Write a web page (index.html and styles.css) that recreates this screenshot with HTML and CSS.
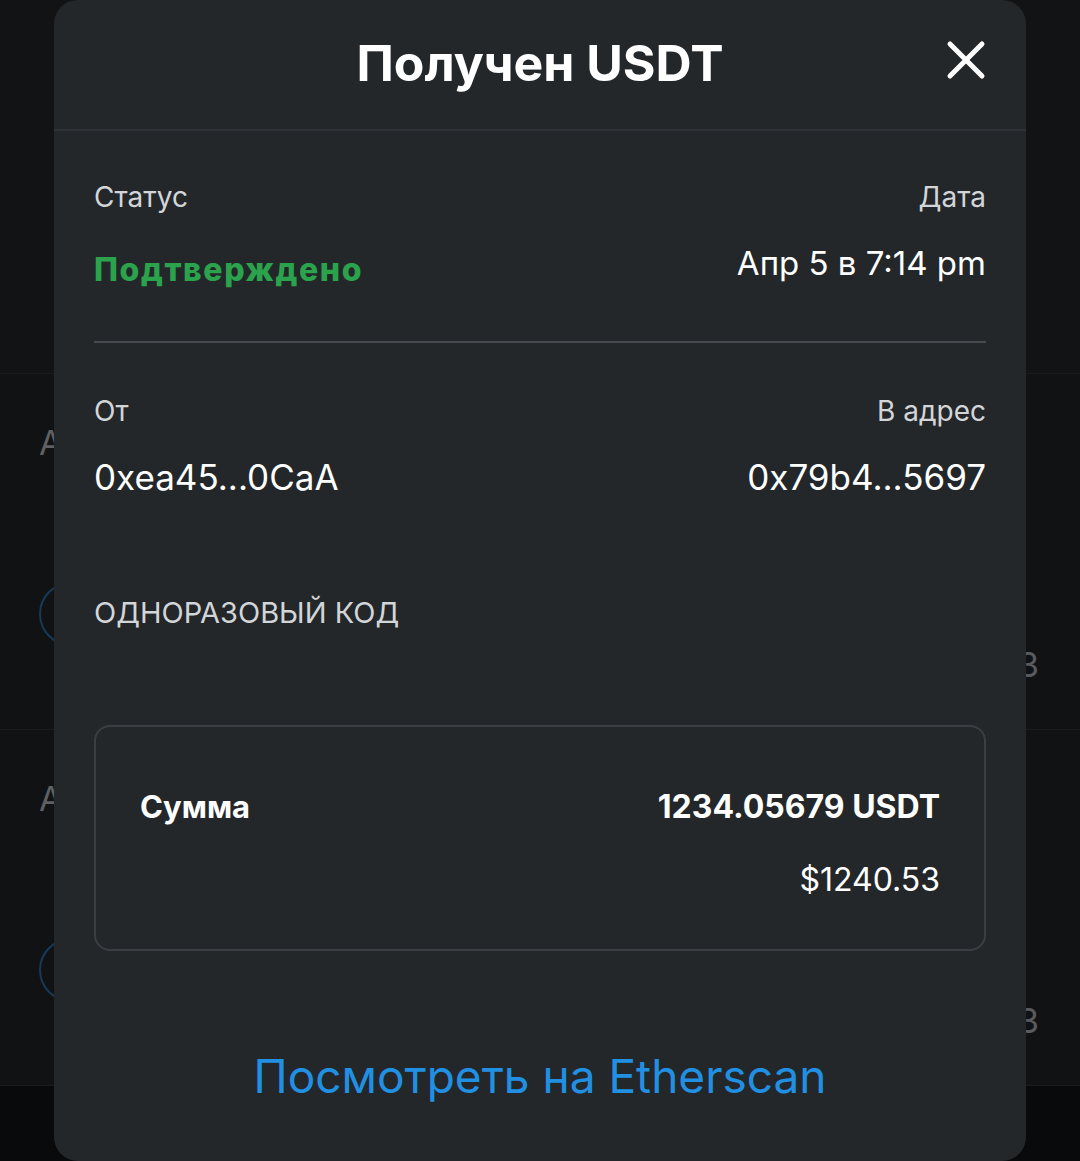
FILE: index.html
```html
<!DOCTYPE html>
<html lang="ru">
<head>
<meta charset="utf-8">
<title>Получен USDT</title>
<link rel="stylesheet" href="styles.css">
</head>
<body>
<div class="screen">
  <div class="backdrop">
    <div class="bg-top"></div>
    <div class="bg-row">
      <span class="bg-letter">A</span>
      <span class="bg-circle"></span>
      <span class="bg-num">3</span>
    </div>
    <div class="bg-row">
      <span class="bg-letter">A</span>
      <span class="bg-circle"></span>
      <span class="bg-num">3</span>
    </div>
    <div class="bg-nav"></div>
  </div>

  <div class="modal">
    <div class="modal-header">
      <h1 class="modal-title">Получен USDT</h1>
      <button class="close-btn" aria-label="Закрыть">
        <svg width="40" height="40" viewBox="0 0 40 40"><path d="M4 4 L36 36 M36 4 L4 36" stroke="#fff" stroke-width="5" stroke-linecap="round" fill="none"/></svg>
      </button>
    </div>
    <div class="modal-body">
      <div class="pair-row">
        <div class="col">
          <div class="label">Статус</div>
          <div class="status">Подтверждено</div>
        </div>
        <div class="col col-right">
          <div class="label">Дата</div>
          <div class="value">Апр 5 в 7:14 pm</div>
        </div>
      </div>
      <div class="divider"></div>
      <div class="pair-row pair-addr">
        <div class="col">
          <div class="label">От</div>
          <div class="value">0xea45...0CaA</div>
        </div>
        <div class="col col-right">
          <div class="label">В адрес</div>
          <div class="value">0x79b4...5697</div>
        </div>
      </div>
      <div class="label otp">ОДНОРАЗОВЫЙ КОД</div>
      <div class="amount-box">
        <div class="amount-row">
          <span class="amount-label">Сумма</span>
          <span class="amount-value">1234.05679 USDT</span>
        </div>
        <div class="amount-fiat">$1240.53</div>
      </div>
      <a class="explorer-link" href="#">Посмотреть на Etherscan</a>
    </div>
  </div>
</div>
</body>
</html>
```

FILE: styles.css
```css
* { box-sizing: border-box; }
html, body {
  margin: 0;
  padding: 0;
  background: #0a0b0c;
}
body {
  font-family: "Inter", "Noto Sans", sans-serif;
  color: #ffffff;
}
.screen {
  position: relative;
  width: 1080px;
  height: 1161px;
  overflow: hidden;
}
.backdrop {
  display: flex;
  flex-direction: column;
  height: 100%;
}
.bg-top {
  height: 374px;
  background: #121315;
  border-bottom: 1px solid #1a1b1d;
}
.bg-row {
  position: relative;
  height: 356px;
  background: #111214;
  border-bottom: 1px solid #1a1b1d;
}
.bg-letter {
  position: absolute;
  left: 39px;
  top: 48px;
  font-size: 34px;
  color: #5e6063;
}
.bg-circle {
  position: absolute;
  left: 39px;
  top: 208px;
  width: 64px;
  height: 64px;
  border: 2px solid #173a5a;
  border-radius: 50%;
}
.bg-num {
  position: absolute;
  left: 1018px;
  top: 270px;
  font-size: 34px;
  color: #595b5e;
}
.bg-nav {
  flex: 1;
  background: #090a0c;
}
.modal {
  position: absolute;
  left: 54px;
  top: 0;
  width: 972px;
  height: 1161px;
  background: #24272a;
  border-radius: 24px;
  display: flex;
  flex-direction: column;
}
.modal-header {
  position: relative;
  height: 131px;
  border-bottom: 2px solid #2f3337;
  display: flex;
  align-items: center;
  justify-content: center;
}
.modal-title {
  margin: 0;
  font-size: 50px;
  font-weight: 700;
  line-height: 1;
  padding-bottom: 4px;
}
.close-btn {
  position: absolute;
  right: 40px;
  top: 40px;
  width: 40px;
  height: 40px;
  padding: 0;
  border: 0;
  background: none;
  display: flex;
}
.modal-body {
  padding: 0 40px;
  display: flex;
  flex-direction: column;
}
.pair-row {
  display: flex;
  justify-content: space-between;
  padding-top: 48px;
}
.col {
  display: flex;
  flex-direction: column;
}
.col-right {
  align-items: flex-end;
}
.label {
  font-size: 28px;
  color: #d3d6d9;
  line-height: 36px;
}
.status {
  margin-top: 37px;
  font-size: 32px;
  font-weight: 800;
  color: #2ba24c;
  line-height: 36px;
  letter-spacing: 1.6px;
}
.value {
  margin-top: 28px;
  font-size: 33px;
  color: #ffffff;
  line-height: 40px;
}
.divider {
  margin-top: 53px;
  height: 2px;
  background: #464a4e;
}
.pair-addr {
  padding-top: 50px;
}
.pair-addr .value {
  margin-top: 28px;
  font-size: 35px;
}
.otp {
  margin-top: 98px;
  font-size: 29px;
}
.amount-box {
  margin-top: 94px;
  border: 2px solid #3b3f43;
  border-radius: 16px;
  padding: 60px 44px 49px;
  display: flex;
  flex-direction: column;
}
.amount-row {
  display: flex;
  justify-content: space-between;
  align-items: center;
}
.amount-label {
  font-size: 31px;
  font-weight: 700;
  line-height: 40px;
}
.amount-value {
  font-size: 32px;
  font-weight: 700;
  line-height: 40px;
}
.amount-fiat {
  margin-top: 33px;
  align-self: flex-end;
  font-size: 32px;
  line-height: 40px;
}
.explorer-link {
  margin-top: 97px;
  align-self: center;
  font-size: 46px;
  color: #2190e3;
  text-decoration: none;
  line-height: 56px;
}
```
